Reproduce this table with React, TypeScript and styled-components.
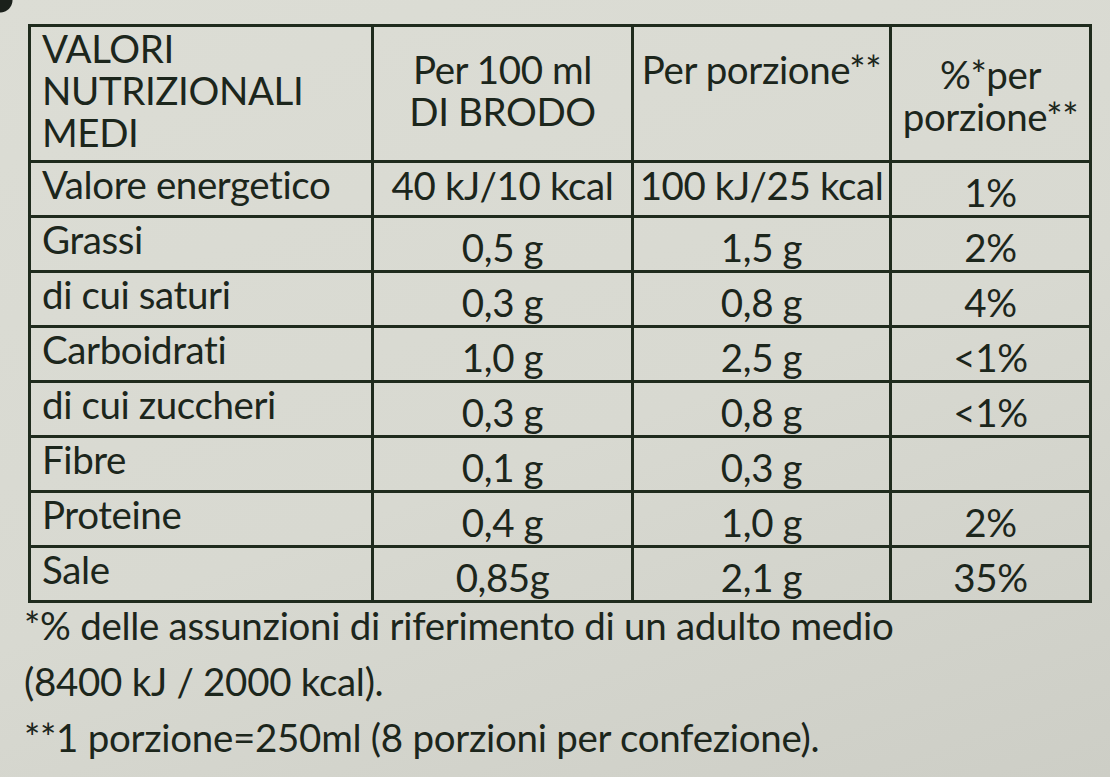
import React from "react";
import styled, { createGlobalStyle } from "styled-components";

const Global = createGlobalStyle`
  html, body { margin: 0; padding: 0; }
  body {
    width: 1110px;
    height: 777px;
    overflow: hidden;
    background:
      radial-gradient(circle at 0px 0px, #1b211b 0 12px, transparent 13px),
      linear-gradient(160deg, #dcddd5 0%, #d8d9d1 55%, #cdcec6 100%);
    font-family: Lato, "Open Sans", sans-serif;
    color: #1c261c;
  }
`;

const Page = styled.div`
  padding: 24px 0 0 28px;
  display: flex;
  flex-direction: column;
`;

const Table = styled.table`
  border-collapse: collapse;
  width: 1061px;
  table-layout: fixed;
  font-size: 38.5px;
  line-height: 42px;
  letter-spacing: -0.4px;
`;

const Col = styled.col<{ $w: number }>`
  width: ${(p) => p.$w}px;
`;

const HeadRow = styled.tr`
  height: 136px;
`;

const Row = styled.tr`
  height: 55px;
`;

const Cell = styled.td<{ $align?: "left" | "center"; $pt?: number }>`
  border: 3px solid #1f2b1d;
  padding: ${(p) => p.$pt ?? 0}px 0 0 ${(p) => (p.$align === "left" ? 11 : 0)}px;
  text-align: ${(p) => p.$align ?? "center"};
  vertical-align: top;
  white-space: nowrap;
  overflow: hidden;
`;

const Notes = styled.div`
  margin-top: -6px;
  margin-left: -4px;
  font-size: 38.5px;
  line-height: 56px;
  letter-spacing: -0.3px;
`;

const rows: [string, string, string, string][] = [
  ["Valore energetico", "40 kJ/10 kcal", "100 kJ/25 kcal", "1%"],
  ["Grassi", "0,5 g", "1,5 g", "2%"],
  ["di cui saturi", "0,3 g", "0,8 g", "4%"],
  ["Carboidrati", "1,0 g", "2,5 g", "<1%"],
  ["di cui zuccheri", "0,3 g", "0,8 g", "<1%"],
  ["Fibre", "0,1 g", "0,3 g", ""],
  ["Proteine", "0,4 g", "1,0 g", "2%"],
  ["Sale", "0,85g", "2,1 g", "35%"],
];

export default function App() {
  return (
    <>
      <Global />
      <Page>
        <Table>
          <colgroup>
            <Col $w={343} />
            <Col $w={260} />
            <Col $w={258} />
            <Col $w={200} />
          </colgroup>
          <tbody>
            <HeadRow>
              <Cell $align="left" $pt={0}>
                VALORI
                <br />
                NUTRIZIONALI
                <br />
                MEDI
              </Cell>
              <Cell $pt={21}>
                Per 100 ml
                <br />
                DI BRODO
              </Cell>
              <Cell $pt={21}>Per porzione**</Cell>
              <Cell $pt={26}>
                %*per
                <br />
                porzione**
              </Cell>
            </HeadRow>
            {rows.map((r, i) => (
              <Row key={i}>
                <Cell $align="left" $pt={0}>
                  {r[0]}
                </Cell>
                <Cell $pt={i === 0 ? 1 : 8}>{r[1]}</Cell>
                <Cell $pt={i === 0 ? 1 : 8}>{r[2]}</Cell>
                <Cell $pt={8}>{r[3]}</Cell>
              </Row>
            ))}
          </tbody>
        </Table>
        <Notes>
          *% delle assunzioni di riferimento di un adulto medio
          <br />
          (8400 kJ / 2000 kcal).
          <br />
          **1 porzione=250ml (8 porzioni per confezione).
        </Notes>
      </Page>
    </>
  );
}
